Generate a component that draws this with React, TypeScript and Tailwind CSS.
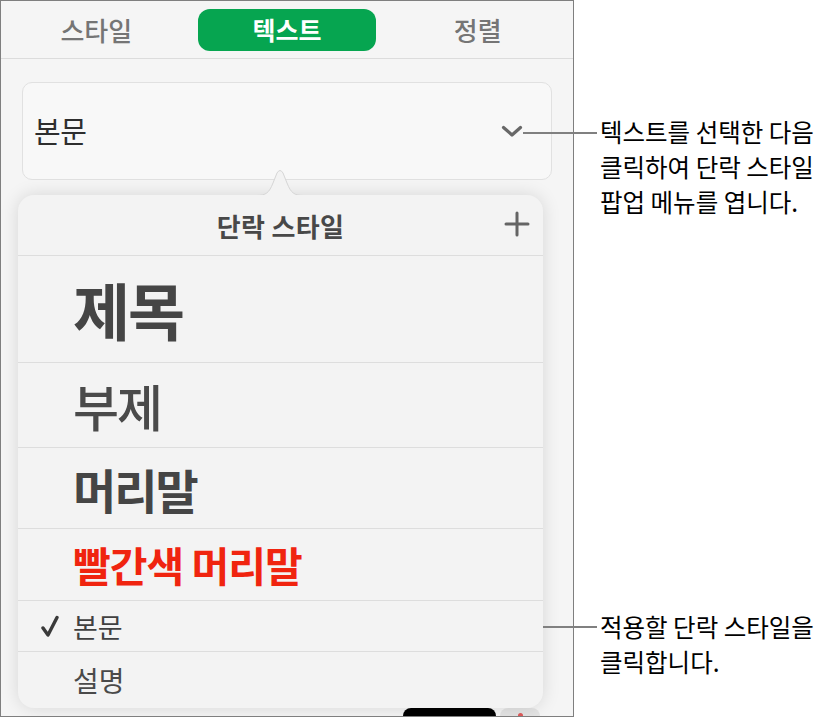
import React from "react";

const font = "font-['Noto_Sans_CJK_KR','Noto_Sans',sans-serif]";

const styles = [
  { label: "제목", h: "h-[107px]", text: "text-[62px] font-bold text-[#454545] tracking-[-2px]" },
  { label: "부제", h: "h-[85px]", text: "text-[50px] font-medium text-[#4a4a4a] tracking-[-2px]" },
  { label: "머리말", h: "h-[81px]", text: "text-[47px] font-bold text-[#454545] tracking-[-2px]" },
  { label: "빨간색 머리말", h: "h-[72px]", text: "text-[41px] font-bold text-[#f0240f] tracking-[-1px]" },
  { label: "본문", h: "h-[51px]", text: "text-[27px] text-[#404040]", checked: true },
  { label: "설명", h: "h-[56px]", text: "text-[28px] text-[#4a4a4a]" },
];

function Chevron() {
  return (
    <svg width="22" height="13" viewBox="0 0 22 13" fill="none">
      <path d="M2.5 2.5 L11 10 L19.5 2.5" stroke="#686868" strokeWidth="3.2" strokeLinecap="round" strokeLinejoin="round" />
    </svg>
  );
}

function Plus() {
  return (
    <svg width="26" height="26" viewBox="0 0 26 26" fill="none">
      <path d="M13 2 V24 M2 13 H24" stroke="#646464" strokeWidth="3" strokeLinecap="round" />
    </svg>
  );
}

function Check() {
  return (
    <svg width="18" height="23" viewBox="0 0 18 23" fill="none">
      <path d="M2 13 L7 20 L16 2.5" stroke="#3a3a3a" strokeWidth="3.4" strokeLinecap="round" strokeLinejoin="round" />
    </svg>
  );
}

function Arrow() {
  return (
    <svg width="48" height="27" viewBox="0 0 48 27" fill="none" className="absolute left-[238px] -top-[26px]">
      <path
        d="M0 26.5 C10 26.5 13 24 17 14 L21 4 Q24 -1 27 4 L31 14 C35 24 38 26.5 48 26.5"
        fill="#f3f3f3"
        stroke="#d6d6d6"
        strokeWidth="1"
      />
      <rect x="0" y="26" width="48" height="2" fill="#f3f3f3" />
    </svg>
  );
}

export default function App() {
  return (
    <div className={`relative w-[827px] h-[718px] bg-white overflow-hidden ${font}`}>
      {/* Inspector panel */}
      <div className="w-[574px] h-[717px] border border-[#7f7f7f] bg-[#f5f5f5] flex flex-col overflow-hidden">
        <div className="h-[58px] shrink-0 border-b border-[#dcdcdc] grid grid-cols-3 items-center">
          <div className="flex justify-center text-[26px] font-medium text-[#757575]">스타일</div>
          <div className="flex justify-center">
            <div className="w-[178px] h-[42px] rounded-[12px] bg-[#06a550] flex items-center justify-center text-[25px] font-bold text-white">
              텍스트
            </div>
          </div>
          <div className="flex justify-center text-[26px] font-medium text-[#757575]">정렬</div>
        </div>

        <div className="ml-[21px] mt-[23px] w-[530px] h-[98px] shrink-0 rounded-[10px] border border-[#e1e1e1] bg-[#f8f8f8] flex items-center justify-between pl-[11px] pr-[28px]">
          <span className="text-[29px] text-[#2e2e2e] tracking-[-0.5px]">본문</span>
          <Chevron />
        </div>

        {/* Paragraph style popover */}
        <div className="relative ml-[17px] mt-[15px] w-[525px] h-[513px] shrink-0 rounded-[16px] bg-[#f3f3f3] shadow-[0_0_18px_rgba(0,0,0,0.13)] flex flex-col">
          <Arrow />
          <div className="h-[61px] shrink-0 border-b border-[#dddddd] flex items-center justify-center relative">
            <span className="text-[26px] font-bold text-[#484848] tracking-[0.3px]">단락 스타일</span>
            <div className="absolute right-[13px] top-[16px]">
              <Plus />
            </div>
          </div>
          {styles.map((s, i) => (
            <div
              key={s.label}
              className={`${s.h} shrink-0 flex items-center ${i < styles.length - 1 ? "border-b border-[#dddddd]" : ""}`}
            >
              <div className="w-[55px] shrink-0 flex justify-end pr-[14px]">{s.checked && <Check />}</div>
              <span className={`${s.text} leading-none`}>{s.label}</span>
            </div>
          ))}
        </div>

        <div className="flex-1 flex items-start pl-[402px] gap-[4px]">
          <div className="w-[93px] h-[10px] rounded-t-[8px] bg-black" />
          <div className="w-[40px] h-[10px] rounded-t-[8px] bg-[#e4e4e4] flex justify-center pt-[5px]">
            <div className="w-[5px] h-[5px] rounded-full bg-[#e05a5a]" />
          </div>
        </div>
      </div>

      {/* Callouts */}
      <div className="absolute left-[523px] top-[132px] w-[74px] h-[2px] bg-[#808080]" />
      <div className="absolute left-[600px] top-[114px] text-[24.5px] leading-[35px] text-black">
        <p>텍스트를 선택한 다음</p>
        <p>클릭하여 단락 스타일</p>
        <p>팝업 메뉴를 엽니다.</p>
      </div>

      <div className="absolute left-[543px] top-[626px] w-[54px] h-[2px] bg-[#808080]" />
      <div className="absolute left-[600px] top-[609px] text-[24.5px] leading-[35px] text-black">
        <p>적용할 단락 스타일을</p>
        <p>클릭합니다.</p>
      </div>
    </div>
  );
}
